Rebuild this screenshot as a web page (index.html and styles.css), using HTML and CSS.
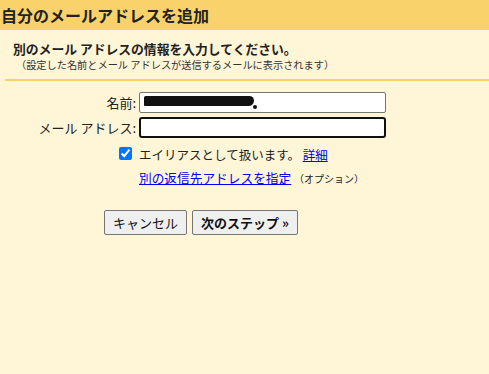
FILE: index.html
```html
<!DOCTYPE html>
<html lang="ja">
<head>
    <meta charset="UTF-8">
    <title>自分のメールアドレスを追加</title>
    <link rel="stylesheet" href="styles.css">
</head>
<body>
    <div class="header">
        <h1>自分のメールアドレスを追加</h1>
    </div>
    <div class="intro">
        <p class="lead">別のメール アドレスの情報を入力してください。</p>
        <p class="note">（設定した名前とメール アドレスが送信するメールに表示されます）</p>
    </div>
    <form class="address-form">
        <div class="row">
            <label for="name">名前:</label>
            <div class="field">
                <input type="text" id="name" class="text-input">
                <span class="redacted"></span>
            </div>
        </div>
        <div class="row">
            <label for="email">メール アドレス:</label>
            <div class="field">
                <input type="text" id="email" class="text-input focused">
            </div>
        </div>
        <div class="row">
            <span class="check-cell"><input type="checkbox" id="alias" checked></span>
            <div class="field check-text">
                <label for="alias">エイリアスとして扱います。</label>
                <a href="#">詳細</a>
            </div>
        </div>
        <div class="row">
            <span></span>
            <div class="field reply-to">
                <a href="#">別の返信先アドレスを指定</a>
                <span class="optional">（オプション）</span>
            </div>
        </div>
        <div class="buttons">
            <button type="button" class="btn">キャンセル</button>
            <button type="button" class="btn btn-next">次のステップ »</button>
        </div>
    </form>
</body>
</html>
```

FILE: styles.css
```css
body {
    margin: 0;
    background-color: #fff5d7;
    font-family: "Noto Sans CJK JP", "Noto Sans", sans-serif;
    color: #222;
    height: 100vh;
}

.header {
    background-color: #f9d26b;
    height: 30px;
    padding-left: 1px;
    display: flex;
    align-items: center;
}

.header h1 {
    margin: 0;
    font-size: 16px;
    font-weight: bold;
    color: #222;
}

.intro {
    margin-left: 5px;
    padding: 10px 0 6px 8px;
    border-bottom: 2px solid #f9d26b;
}

.intro p {
    margin: 0;
}

.lead {
    font-size: 12.8px;
    font-weight: bold;
    line-height: 17px;
}

.note {
    font-size: 10.2px;
    line-height: 16px;
    padding-left: 3px;
    color: #333;
}

.address-form {
    padding-top: 11px;
}

.row {
    display: grid;
    grid-template-columns: 136px 247px;
    column-gap: 3px;
    align-items: center;
    margin-bottom: 4px;
    font-size: 13px;
}

.row > label {
    text-align: right;
}

.field {
    position: relative;
}

.text-input {
    display: block;
    width: 100%;
    height: 21px;
    box-sizing: border-box;
    border: 1px solid #767676;
    border-radius: 2px;
    background: #fff;
    margin: 0;
    padding: 0 4px;
}

.text-input.focused {
    border: 2px solid #101010;
    border-radius: 3px;
}

.redacted {
    position: absolute;
    left: 5px;
    top: 4px;
    width: 110px;
    height: 10px;
    background: #111;
    border-radius: 2px 5px 6px 1px;
}

.redacted::after {
    content: "";
    position: absolute;
    right: -3px;
    top: 9px;
    width: 4px;
    height: 4px;
    border-radius: 50%;
    background: #111;
}

.check-cell {
    text-align: right;
    height: 22px;
}

.check-cell input {
    margin: 5px 4px 0 0;
    width: 13px;
    height: 13px;
}

.check-text {
    font-size: 12.5px;
    margin-top: 2px;
}

.check-text a,
.reply-to a {
    color: #0000ee;
}

.reply-to {
    margin-top: 0;
    font-size: 12.7px;
}

.optional {
    font-size: 10px;
}

.buttons {
    display: flex;
    gap: 5px;
    padding-left: 104px;
    margin-top: 23px;
}

.btn {
    font-family: inherit;
    font-size: 13px;
    height: 25px;
    padding: 0 8px;
    background: #efefef;
    border: 1px solid #767676;
    border-radius: 2px;
    color: #111;
}

.btn-next {
    font-weight: bold;
}
```
